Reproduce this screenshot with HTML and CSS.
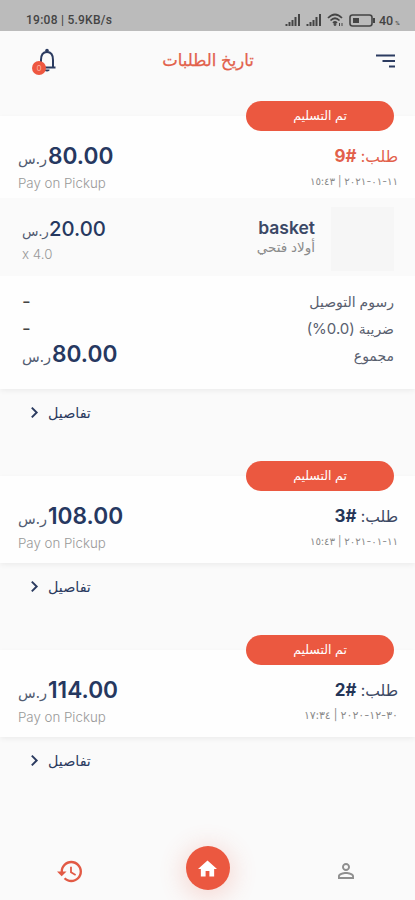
FILE: index.html
```html
<!DOCTYPE html>
<html lang="ar" dir="rtl">
<head>
<meta charset="utf-8">
<title>تاريخ الطلبات</title>
<link rel="stylesheet" href="styles.css">
</head>
<body>
<div class="status" dir="ltr">
  <span class="clock">19:08 | 5.9KB/s</span>
  <div class="status-icons">
    <svg class="signal" viewBox="0 0 17 12"><path d="M1.500 12v-2M4.500 12v-4M7.500 12v-6M10.500 12v-9M14 12v-12"/></svg>
    <svg class="signal" viewBox="0 0 17 12"><path d="M1.500 12v-2M4.500 12v-4M7.500 12v-6M10.500 12v-9M14 12v-12"/></svg>
    <svg class="wifi" viewBox="0 0 17 14"><path d="M1 5Q8 -2 15 5M3.500 7.500Q8 3 12.500 7.500M6 10Q8 8 10 10"/><circle cx="8" cy="11.500" r=".6"/><path class="thin" d="M12.500 10v3M15 10v3"/></svg>
    <svg class="battery" viewBox="0 0 27 13"><rect x="1" y="1" width="22" height="11" rx="2.500"/><path class="fill" d="M4 4h6v5H4zM24 4h2v5h-2z"/></svg>
    <span class="percent">40<small>%</small></span>
  </div>
</div>
<header class="appbar">
  <svg class="menu" viewBox="0 0 20 14"><path d="M0 1.500h19M6.500 7h12.500M13 12.500h6"/></svg>
  <h1>تاريخ الطلبات</h1>
  <div class="bell">
    <svg viewBox="0 0 20 26"><path d="M1.500 19.500h17M4 19V12C4 7 6 4 10 4s6 3 6 8v7"/><circle class="clapper" cx="10" cy="2.500" r="1.800"/><path class="clapper" d="M7.500 21.500h5v1q-2.500 2-5 0z"/></svg>
    <span class="count">0</span>
  </div>
</header>
<main>
  <section class="order">
    <span class="badge">تم التسليم</span>
    <div class="card">
      <div class="summary expanded">
        <div class="info">
          <div class="number active">طلب: <b>#9</b></div>
          <div class="date">١١-٠١-٢٠٢١ | ١٥:٤٣</div>
        </div>
        <div class="pay" dir="ltr">
          <div class="price"><i>ر.س</i><b>80.00</b></div>
          <div class="method">Pay on Pickup</div>
        </div>
      </div>
      <div class="item">
        <div class="thumb"></div>
        <div class="product"><b>basket</b><span>أولاد فتحي</span></div>
        <div class="pay" dir="ltr">
          <div class="price small"><i>ر.س</i><b>20.00</b></div>
          <div class="method qty">x 4.0</div>
        </div>
      </div>
      <div class="totals">
        <div class="row"><span>رسوم التوصيل</span><span class="dash">-</span></div>
        <div class="row"><span>ضريبة <span class="tax">(0.0%)</span></span><span class="dash">-</span></div>
        <div class="row"><span>مجموع</span><div class="price" dir="ltr"><i>ر.س</i><b>80.00</b></div></div>
      </div>
    </div>
    <div class="details"><span>تفاصيل</span><svg viewBox="0 0 8 12"><path d="M1.500 1.500L6 6l-4.500 4.500"/></svg></div>
  </section>
  <section class="order">
    <span class="badge">تم التسليم</span>
    <div class="card">
      <div class="summary">
        <div class="info">
          <div class="number">طلب: <b>#3</b></div>
          <div class="date">١١-٠١-٢٠٢١ | ١٥:٤٣</div>
        </div>
        <div class="pay" dir="ltr">
          <div class="price"><i>ر.س</i><b>108.00</b></div>
          <div class="method">Pay on Pickup</div>
        </div>
      </div>
    </div>
    <div class="details"><span>تفاصيل</span><svg viewBox="0 0 8 12"><path d="M1.500 1.500L6 6l-4.500 4.500"/></svg></div>
  </section>
  <section class="order">
    <span class="badge">تم التسليم</span>
    <div class="card">
      <div class="summary">
        <div class="info">
          <div class="number">طلب: <b>#2</b></div>
          <div class="date wide">٣٠-١٢-٢٠٢٠ | ١٧:٣٤</div>
        </div>
        <div class="pay" dir="ltr">
          <div class="price"><i>ر.س</i><b>114.00</b></div>
          <div class="method">Pay on Pickup</div>
        </div>
      </div>
    </div>
    <div class="details"><span>تفاصيل</span><svg viewBox="0 0 8 12"><path d="M1.500 1.500L6 6l-4.500 4.500"/></svg></div>
  </section>
</main>
<nav class="tabs" dir="ltr">
  <svg class="history" viewBox="1 3 21 18"><path d="M13 3a9 9 0 0 0-9 9H1l3.890 3.890.070.140L9 12H6c0-3.870 3.130-7 7-7s7 3.130 7 7-3.130 7-7 7c-1.930 0-3.680-.790-4.940-2.060l-1.420 1.420A8.954 8.954 0 0 0 13 21a9 9 0 0 0 0-18zm-1 5v5l4.280 2.540.720-1.210-3.500-2.080V8H12z"/></svg>
  <span class="home"><svg viewBox="2 3 20 17"><path d="M10 20v-6h4v6h5v-8h3L12 3 2 12h3v8z"/></svg></span>
  <svg class="person" viewBox="4 4 16 16"><path d="M12 5.900a2.100 2.100 0 1 1 0 4.200 2.100 2.100 0 0 1 0-4.200m0 9c2.970 0 6.100 1.460 6.100 2.100v1.100H5.900V17c0-.640 3.130-2.100 6.100-2.100M12 4C9.790 4 8 5.790 8 8s1.790 4 4 4 4-1.790 4-4-1.790-4-4-4zm0 9c-2.670 0-8 1.340-8 4v3h16v-3c0-2.660-5.330-4-8-4z"/></svg>
</nav>
</body>
</html>
```
FILE: styles.css
```css
* { box-sizing: border-box; }
body {
  margin: 0;
  height: 900px;
  display: flex;
  flex-direction: column;
  overflow: hidden;
  background: #fafafa;
  color: #2b3b60;
  font-family: Inter, "DejaVu Sans", sans-serif;
}
svg { display: block; fill: none; stroke: currentColor; }
.status {
  height: 31px;
  padding: 9px 13px 0 26px;
  display: flex;
  justify-content: space-between;
  align-items: flex-start;
  background: #bbb;
  color: #444;
  font-family: Roboto, sans-serif;
}
.clock { font-size: 12px; line-height: 22px; font-weight: 500; letter-spacing: .25px; }
.status-icons { display: flex; align-items: center; height: 22px; }
.signal { width: 17px; height: 12px; margin-right: 4px; stroke-width: 2; }
.wifi { width: 17px; height: 14px; margin-right: 5px; stroke-width: 1.7; }
.wifi .thin { stroke-width: 1; }
.battery { width: 27px; height: 13px; margin-right: 3px; stroke-width: 1.6; }
.battery .fill { fill: currentColor; stroke: none; }
.percent { font-size: 12.5px; font-weight: 500; width: 23px; white-space: nowrap; }
.percent small { font-size: 6px; margin-left: 2px; }
.appbar {
  height: 70px;
  padding: 0 19px 12px 33px;
  display: grid;
  grid-template-columns: 26px 1fr 26px;
  align-items: center;
}
.menu { width: 20px; height: 14px; stroke-width: 2; margin-top: 2px; }
h1 { margin: 0 13px 0 0; padding-left: 0; text-align: center; font-size: 16.5px; line-height: 24px; font-weight: 400; color: #e2604a; -webkit-text-stroke: .25px #e2604a; white-space: nowrap; }
.bell { position: relative; width: 26px; height: 26px; justify-self: end; margin-top: 2px; }
.bell svg { width: 20px; height: 26px; margin-right: 2px; stroke-width: 2; }
.bell .clapper { fill: currentColor; stroke: none; }
.count {
  position: absolute;
  left: -1px;
  top: 13px;
  width: 14px;
  height: 14px;
  border-radius: 50%;
  background: #ee5740;
  color: #ffb09f;
  font-size: 8px;
  line-height: 14px;
  text-align: center;
}
.order { display: flex; flex-direction: column; align-items: stretch; margin-bottom: 25px; }
.badge {
  width: 148px;
  height: 30px;
  margin: 0 21px -15px 0;
  position: relative;
  z-index: 1;
  border-radius: 15px;
  background: #eb5840;
  color: #fff;
  font-size: 12.5px;
  line-height: 29px;
  text-align: center;
}
.card { background: #fefefe; box-shadow: 0 2px 5px rgba(0, 0, 0, .055); }
.summary {
  height: 87px;
  padding: 26px 17px 0 18px;
  display: flex;
  justify-content: space-between;
}
.summary.expanded { height: 82px; }
.number { font-size: 15.5px; line-height: 28px; color: #3c4863; }
.number b { font-size: 17px; font-weight: 700; color: #243557; }
.number.active, .number.active b { color: #e2604a; }
.date { font-size: 10.3px; line-height: 20px; color: #8b8b8b; white-space: nowrap; }
.date.wide { font-size: 11px; }
.price { display: flex; align-items: baseline; line-height: 28px; white-space: nowrap; }
.price i { font-style: normal; font-size: 14.5px; width: 30px; color: #525c72; }
.price b { font-size: 22.7px; font-weight: 600; color: #263860; }
.method { font-size: 13.3px; line-height: 22px; font-weight: 300; color: #999; }
.summary .method { margin-top: -1px; }
.item {
  height: 78px;
  padding: 9px 21px 0 22px;
  display: flex;
  background: #fafafa;
}
.thumb { width: 63px; height: 64px; background: #f6f6f6; }
.product { margin: 9px 16px 0 auto; display: flex; flex-direction: column; }
.product b { font-size: 17.5px; line-height: 24px; font-weight: 600; color: #3b4866; }
.product span { font-size: 13.5px; line-height: 18px; margin-top: -2px; color: #8b8b8b; }
.item .pay { padding-top: 10px; }
.price.small { line-height: 24px; }
.price.small i { width: 27px; font-size: 13.5px; }
.price.small b { font-size: 20.3px; font-weight: 500; }
.qty { line-height: 22px; }
.totals { height: 113px; padding: 12px 21px 0 22px; }
.row { height: 27px; display: flex; justify-content: space-between; align-items: center; font-size: 14px; color: #59606f; }
.tax { font-size: 15px; }
.dash { font-size: 19px; color: #444; }
.details {
  height: 47px;
  padding-left: 30px;
  display: flex;
  justify-content: flex-end;
  align-items: center;
  gap: 9px;
  font-size: 14.3px;
}
.details svg { width: 9px; height: 13px; stroke-width: 1.8; }
.tabs {
  margin-top: auto;
  height: 64px;
  padding: 0 61px 0 57px;
  display: flex;
  justify-content: space-between;
  align-items: center;
}
.tabs svg { stroke: none; fill: currentColor; }
.history { width: 25px; height: 23px; color: #e25a45; margin-top: 6px; }
.home {
  width: 44px;
  height: 44px;
  margin-right: 5px;
  border-radius: 50%;
  background: #eb5840;
  color: #fff;
  display: grid;
  place-items: center;
  box-shadow: 0 4px 24px 4px rgba(235, 88, 64, .2);
}
.home svg { width: 19px; height: 17px; }
.person { width: 16px; height: 16px; color: #8f8f8f; margin-top: 6px; }
```
